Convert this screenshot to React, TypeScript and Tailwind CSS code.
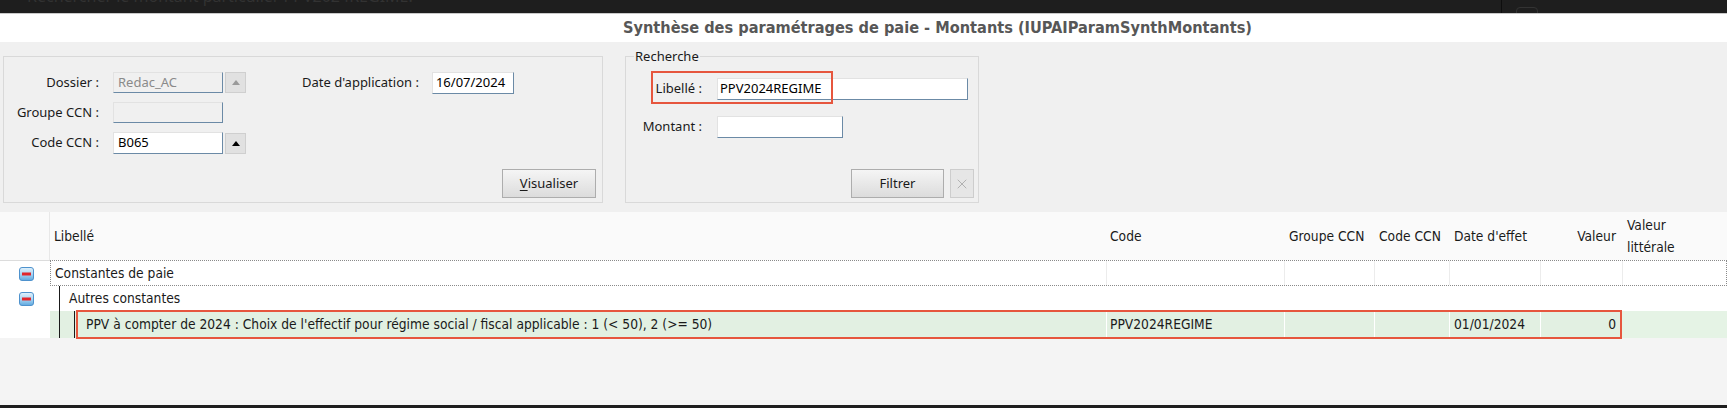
import { X } from "lucide-react";

function MinusIcon() {
  return (
    <svg width="15" height="14" viewBox="0 0 15 14">
      <defs>
        <linearGradient id="mg" x1="0" y1="0" x2="0" y2="1">
          <stop offset="0" stopColor="#e2f2fc" />
          <stop offset="0.5" stopColor="#acd6f3" />
          <stop offset="1" stopColor="#5ea8df" />
        </linearGradient>
      </defs>
      <rect x="0.5" y="0.5" width="14" height="13" rx="2.5" fill="url(#mg)" stroke="#4e92cd" />
      <rect x="3" y="5.5" width="9" height="3" fill="#e1262b" />
    </svg>
  );
}

function ArrowButton({ disabled }: { disabled?: boolean }) {
  return (
    <div className="ml-[2px] flex h-[21px] w-[21px] items-center justify-center border border-[#cfcfcf] bg-[#e1e1e1]">
      <div
        className={
          disabled
            ? "h-0 w-0 border-b-[5px] border-l-[4px] border-r-[4px] border-b-[#9a9a9a] border-l-transparent border-r-transparent"
            : "h-0 w-0 border-b-[5px] border-l-[4px] border-r-[4px] border-b-black border-l-transparent border-r-transparent"
        }
      />
    </div>
  );
}

const inputBorder = "border border-t-[#e2e2e2] border-l-[#e2e2e2] border-b-[#6b8aa6] border-r-[#6b8aa6]";

export default function App() {
  return (
    <div className="flex h-[408px] w-[1727px] flex-col overflow-hidden bg-[#f0f0f0] font-['Noto_Sans',sans-serif] text-[13px] text-[#1a1a1a]">
      {/* window chrome, clipped */}
      <div className="flex h-[13px] overflow-hidden bg-[#1e1e1e]">
        <div className="-mt-[14px] ml-[27px] w-[1474px] whitespace-nowrap text-[16px] leading-[20px] text-[#323232]">
          Rechercher le montant particulier PPV2024REGIME.
        </div>
        <div className="h-full w-px bg-[#0e0e0e]" />
        <div className="ml-[14px] mt-[7px] h-[10px] w-[22px] rounded-sm border border-[#333]" />
      </div>
      <div className="h-px bg-[#c9c9c9]" />
      <div className="flex h-[28px] items-center whitespace-nowrap bg-white pl-[623px] font-['DejaVu_Sans_Condensed','DejaVu_Sans',sans-serif] text-[16.2px] font-bold text-[#575757]">
        Synthèse des paramétrages de paie - Montants (IUPAIParamSynthMontants)
      </div>

      {/* filter panels */}
      <div className="flex h-[170px] items-start">
        <div className="ml-[3px] mt-[14px] flex h-[147px] w-[600px] flex-col border border-[#d9d9d9] pt-[15px]">
          <div className="flex h-[21px] items-center">
            <div className="w-[95px] text-right">Dossier :</div>
            <div className={`ml-[14px] flex h-[21px] w-[110px] items-center bg-[#f0f0f0] pl-[4px] text-[#8a8a8a] ${inputBorder}`}>
              Redac_AC
            </div>
            <ArrowButton disabled />
            <div className="ml-[56px] whitespace-nowrap">Date d'application :</div>
            <div className={`ml-[13px] flex h-[22px] w-[82px] items-center bg-white pl-[3px] text-black ${inputBorder}`}>
              16/07/2024
            </div>
          </div>
          <div className="mt-[9px] flex h-[21px] items-center">
            <div className="w-[95px] text-right">Groupe CCN :</div>
            <div className={`ml-[14px] h-[21px] w-[110px] bg-[#f0f0f0] ${inputBorder}`} />
          </div>
          <div className="mt-[9px] flex h-[22px] items-center">
            <div className="w-[95px] text-right">Code CCN :</div>
            <div className={`ml-[14px] flex h-[22px] w-[110px] items-center bg-white pl-[4px] text-black ${inputBorder}`}>
              B065
            </div>
            <ArrowButton />
          </div>
          <div className="mt-auto flex justify-end pb-[4px] pr-[6px]">
            <div className="flex h-[29px] w-[94px] items-center justify-center border border-[#adadad] bg-gradient-to-b from-[#f5f5f5] to-[#dcdcdc]">
              <span className="underline underline-offset-2">V</span>isualiser
            </div>
          </div>
        </div>

        <div className="relative ml-[22px] mt-[14px] flex h-[147px] w-[354px] flex-col border border-[#d9d9d9]">
          <div className="-mt-[9px] ml-[8px] w-fit bg-[#f0f0f0] px-[1px] leading-[16px]">Recherche</div>
          <div className="mt-[14px] flex h-[22px] items-center">
            <div className="w-[76px] text-right">Libellé :</div>
            <div className={`ml-[15px] flex h-[22px] w-[251px] items-center bg-white pl-[2px] text-black ${inputBorder}`}>
              PPV2024REGIME
            </div>
          </div>
          <div className="mt-[16px] flex h-[22px] items-center">
            <div className="w-[76px] text-right">Montant :</div>
            <div className={`ml-[15px] h-[22px] w-[126px] bg-white ${inputBorder}`} />
          </div>
          <div className="mt-auto flex justify-end gap-[6px] pb-[4px] pr-[4px]">
            <div className="flex h-[29px] w-[93px] items-center justify-center border border-[#adadad] bg-gradient-to-b from-[#f5f5f5] to-[#dcdcdc]">
              Filtrer
            </div>
            <div className="flex h-[29px] w-[24px] items-center justify-center border border-[#cdcdcd] bg-[#e6e6e6]">
              <X size={16} strokeWidth={1.2} color="#a3a3a3" />
            </div>
          </div>
          <div className="absolute left-[25px] top-[14px] h-[33px] w-[182px] border-2 border-[#e6563e]" />
        </div>
      </div>

      {/* tree table */}
      <div className="flex h-[193px] flex-col bg-[#f4f4f4] font-['DejaVu_Sans_Condensed','DejaVu_Sans',sans-serif] text-[13.7px] text-[#1a1a1a]">
        <div className="flex h-[48px] items-center bg-[#fafafa] whitespace-nowrap">
          <div className="h-full w-[50px] border-r border-[#e8e8e8]" />
          <div className="w-[1056px] pl-[4px]">Libellé</div>
          <div className="w-[178px] pl-[4px]">Code</div>
          <div className="w-[90px] pl-[5px]">Groupe CCN</div>
          <div className="w-[75px] pl-[5px]">Code CCN</div>
          <div className="w-[91px] pl-[5px]">Date d'effet</div>
          <div className="w-[82px] pr-[6px] text-right">Valeur</div>
          <div className="flex-1 pl-[5px] leading-[22px]">
            Valeur
            <br />
            littérale
          </div>
        </div>

        <div className="flex h-[26px] bg-white">
          <div className="flex w-[50px] items-center border-t border-[#dcdcdc] pl-[19px]">
            <MinusIcon />
          </div>
          <div className="flex flex-1 items-stretch border border-dotted border-[#8a8a8a]">
            <div className="flex w-[1055px] items-center pl-[4px]">Constantes de paie</div>
            <div className="w-[178px] border-l border-[#ececec]" />
            <div className="w-[90px] border-l border-[#ececec]" />
            <div className="w-[75px] border-l border-[#ececec]" />
            <div className="w-[91px] border-l border-[#ececec]" />
            <div className="w-[82px] border-l border-[#ececec]" />
            <div className="flex-1 border-l border-[#ececec]" />
          </div>
        </div>

        <div className="flex h-[25px] bg-white">
          <div className="flex w-[50px] items-center pl-[19px]">
            <MinusIcon />
          </div>
          <div className="ml-[9px] w-px bg-[#1a1a1a]" />
          <div className="ml-[9px] flex items-center">Autres constantes</div>
        </div>

        <div className="flex h-[27px]">
          <div className="w-[50px] bg-white" />
          <div className="flex flex-1 bg-[#e2f0e2]">
            <div className="ml-[9px] w-px bg-[#1a1a1a]" />
            <div className="ml-[14px] w-px bg-[#1a1a1a]" />
            <div className="-my-px ml-px flex h-[29px] w-[1546px] border-2 border-[#e6563e]">
              <div className="flex w-[1028px] items-center whitespace-nowrap pl-[8px]">
                PPV à compter de 2024 : Choix de l'effectif pour régime social / fiscal applicable : 1 (&lt; 50), 2 (&gt;= 50)
              </div>
              <div className="flex w-[178px] items-center border-l border-white pl-[3px]">PPV2024REGIME</div>
              <div className="w-[90px] border-l border-white" />
              <div className="w-[75px] border-l border-white" />
              <div className="flex w-[91px] items-center border-l border-white pl-[4px]">01/01/2024</div>
              <div className="flex w-[80px] items-center justify-end border-l border-white pr-[4px]">0</div>
            </div>
            <div className="flex-1 bg-[#e5f3e5]" />
          </div>
        </div>
      </div>
      <div className="h-[3px] bg-[#1e1e1e]" />
    </div>
  );
}
